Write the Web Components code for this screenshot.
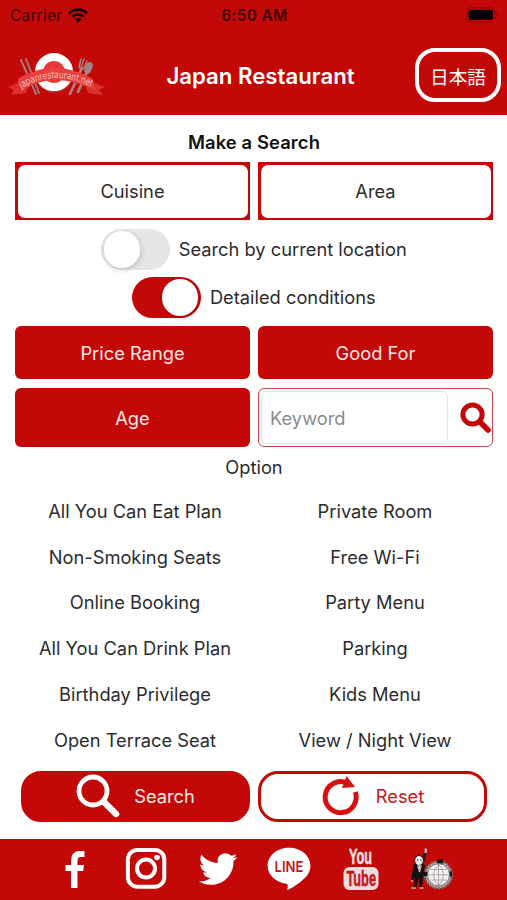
<!DOCTYPE html>
<html lang="en">
<head>
<meta charset="utf-8">
<title>Japan Restaurant</title>
<style>
  body {
    margin: 0;
    background: #fff;
    color: #2b2b2d;
    font-family: Inter, "Liberation Sans", "Noto Sans CJK JP", sans-serif;
    font-size: 18.3px;
    --red: #c30808;
  }
</style>
</head>
<body>
<search-app></search-app>

<script>
/**
 * StatusBar - phone status line with carrier, clock and battery
 */
class StatusBar extends HTMLElement {
  connectedCallback() {
    this.attachShadow({ mode: 'open' }).innerHTML = `
      <style>
        :host {
          display: grid;
          grid-template-columns: 1fr auto 1fr;
          align-items: center;
          height: 30px;
          padding: 0 8px 0 10px;
          color: #3f0203;
          font-size: 15.5px;
        }
        .carrier { display: flex; align-items: center; gap: 6px; letter-spacing: 0.2px; }
        .time { font-weight: 600; letter-spacing: 0.3px; }
        .battery { justify-self: end; }
        svg { display: block; }
      </style>
      <div class="carrier">
        <span>Carrier</span>
        <svg width="20" height="15" viewBox="0 0 20 15" fill="none" stroke="#140000" stroke-width="2.7">
          <path d="M1 5.3a13 13 0 0 1 18 0M4.3 8.8a8.2 8.2 0 0 1 11.4 0"/>
          <path d="M6.7 11.2a4.9 4.9 0 0 1 6.6 0L10 14.7z" fill="#140000" stroke="none"/>
        </svg>
      </div>
      <span class="time">6:50 AM</span>
      <svg class="battery" width="33" height="16" viewBox="0 0 33 16">
        <rect x=".8" y=".8" width="28" height="14" rx="4" fill="none" stroke="#960506" stroke-width="1.2"/>
        <rect x="2.6" y="2.7" width="24.4" height="10.2" rx="2.4" fill="#000"/>
        <path d="M30.5 5.5q2.6 2.2 0 4.6z" fill="#960506"/>
      </svg>
    `;
  }
}

/**
 * BrandLogo - plate, cutlery and ribbon
 */
class BrandLogo extends HTMLElement {
  connectedCallback() {
    this.attachShadow({ mode: 'open' }).innerHTML = `
      <style>
        :host { display: block; }
        svg { display: block; }
      </style>
      <svg width="98" height="48" viewBox="0 0 98 48">
        <g stroke="#a67777" stroke-width="2" stroke-linecap="round">
          <path d="M13 9l15 34M18 8l13 34"/>
        </g>
        <g stroke="#a58585" stroke-width="2.6" stroke-linecap="round" fill="#a58585">
          <path d="M74 17L62 43M79 21L70 41"/>
          <path d="M73 8l-2 8q2 4 5 1l3-7M76 8l-3 8" fill="none" stroke-width="1.5"/>
          <ellipse cx="80.5" cy="17" rx="2.3" ry="5" transform="rotate(22 80.5 17)"/>
        </g>
        <circle cx="46" cy="22.5" r="19" fill="#a94848"/>
        <circle cx="46" cy="21" r="15" fill="#e53a38" stroke="#fff" stroke-width="8"/>
        <path d="M12 31L0 36l6 3-3 5 15-2 2-7zM84 31l13 5-6 3 4 5-15-2-2-7z" fill="#dc302e"/>
        <path d="M10 27.500Q46 6 84 27.500L88 40Q46 18 13 40z" fill="#e83f3d"/>
        <path id="arc" d="M13.500 37.500Q46 17 86 37" fill="none"/>
        <text font-size="10" fill="#f9c1bc"><textPath href="#arc" textLength="73" lengthAdjust="spacingAndGlyphs">japanrestaurant.net</textPath></text>
      </svg>
    `;
  }
}

/**
 * PageHeader - title bar; the "lang" slot holds the language button
 */
class PageHeader extends HTMLElement {
  connectedCallback() {
    this.attachShadow({ mode: 'open' }).innerHTML = `
      <style>
        :host { display: block; height: 115px; background: var(--red); }
        .bar {
          display: grid;
          grid-template-columns: 1fr auto 1fr;
          align-items: center;
          height: 54px;
          padding: 18px 6px 0 8px;
        }
        h1 {
          margin: 0 0 0 12px;
          color: #fff;
          font-size: 22.2px;
          font-weight: 600;
          white-space: nowrap;
        }
        .lang {
          justify-self: end;
          display: flex;
          align-items: center;
          justify-content: center;
          box-sizing: border-box;
          width: 86px;
          height: 54px;
          border: 4px solid #fff;
          border-radius: 20px;
          color: #fff;
          font-family: "Noto Sans CJK JP", sans-serif;
          font-size: 18.7px;
        }
      </style>
      <status-bar></status-bar>
      <div class="bar">
        <brand-logo></brand-logo>
        <h1><slot></slot></h1>
        <div class="lang"><slot name="lang"></slot></div>
      </div>
    `;
  }
}

/**
 * SelectBox - large picker button
 *
 * @attr {boolean} outline - white with a square red frame
 */
class SelectBox extends HTMLElement {
  connectedCallback() {
    this.attachShadow({ mode: 'open' }).innerHTML = `
      <style>
        :host { display: block; background: var(--red); border-radius: 6px; color: #ffe9e6; }
        :host([outline]) { padding: 2.5px; border-radius: 0; color: #2b2b2d; box-sizing: border-box; }
        .face {
          display: flex;
          align-items: center;
          justify-content: center;
          height: 100%;
          border-radius: 7px;
        }
        :host([outline]) .face { background: #fff; }
      </style>
      <div class="face"><slot></slot></div>
    `;
  }
}

/**
 * ToggleRow - switch with a label
 *
 * @attr {boolean} on
 */
class ToggleRow extends HTMLElement {
  connectedCallback() {
    this.attachShadow({ mode: 'open' }).innerHTML = `
      <style>
        :host { display: flex; align-items: center; justify-content: center; gap: 9px; height: 41px; }
        .track {
          display: flex;
          box-sizing: border-box;
          width: 68.5px;
          height: 41.5px;
          padding: 2.5px;
          border-radius: 21px;
          background: #e6e6e8;
        }
        .knob {
          width: 36.5px;
          height: 36.5px;
          border-radius: 50%;
          background: #fff;
          box-shadow: 1px 2px 6px rgba(0, 0, 0, 0.16);
        }
        :host([on]) .track { background: var(--red); justify-content: flex-end; }
        .label { padding-bottom: 1px; }
      </style>
      <div class="track"><div class="knob"></div></div>
      <span class="label"><slot></slot></span>
    `;
  }
}

class KeywordField extends HTMLElement {
  connectedCallback() {
    this.attachShadow({ mode: 'open' }).innerHTML = `
      <style>
        :host {
          display: flex;
          align-items: center;
          justify-content: space-between;
          box-sizing: border-box;
          border: 1.3px solid #cd4444;
          border-radius: 6px;
          padding: 2px 1px 2px 2px;
        }
        .input {
          display: flex;
          align-items: center;
          box-sizing: border-box;
          width: 187px;
          height: 100%;
          padding-left: 8px;
          border: 1px solid #e6e6e6;
          border-radius: 5px;
          color: #8a8a8c;
        }
        svg { display: block; }
      </style>
      <div class="input"><slot></slot></div>
      <svg width="31" height="31" viewBox="0 0 31 31" fill="none" stroke="#c30808">
        <circle cx="12.5" cy="12.5" r="9.6" stroke-width="5"/>
        <path d="M20 20l8 8" stroke-width="5.6" stroke-linecap="round"/>
      </svg>
    `;
  }
}

/**
 * PillButton - rounded action button; icon goes in the "icon" slot
 *
 * @attr {boolean} outline
 */
class PillButton extends HTMLElement {
  connectedCallback() {
    this.attachShadow({ mode: 'open' }).innerHTML = `
      <style>
        :host {
          display: flex;
          align-items: center;
          justify-content: center;
          gap: 14px;
          box-sizing: border-box;
          border: 3.5px solid var(--red);
          border-radius: 20px;
          background: var(--red);
          color: #ffe9e6;
        }
        :host([outline]) { background: #fff; color: #c3161a; gap: 17px; }
      </style>
      <slot name="icon"></slot>
      <slot></slot>
    `;
  }
}

/**
 * SocialBar - footer with links to the social accounts
 */
class SocialBar extends HTMLElement {
  connectedCallback() {
    this.attachShadow({ mode: 'open' }).innerHTML = `
      <style>
        :host {
          display: grid;
          grid-template-columns: repeat(6, 71.6px);
          justify-content: center;
          justify-items: center;
          align-items: center;
          height: 59px;
          padding-bottom: 2px;
          background: var(--red);
        }
        svg { display: block; overflow: visible; }
      </style>
      <svg width="44" height="44" viewBox="0 0 44 44">
        <path fill="#fff" d="M18 41V24h-5.500v-6H18v-4.500Q18 4 27 4h4.500v6h-4Q24.500 10 24.500 13.500V18h6.500l-.8 6h-5.700v17z"/>
      </svg>
      <svg width="44" height="44" viewBox="0 0 44 44" fill="none" stroke="#fff">
        <rect x="3.900" y="2.900" width="36.400" height="36.800" rx="9.500" stroke-width="4"/>
        <circle cx="22" cy="21.500" r="9" stroke-width="4"/>
        <circle cx="33" cy="10.500" r="2.800" fill="#fff" stroke="none"/>
      </svg>
      <svg width="44" height="44" viewBox="0 0 44 44">
        <path fill="#fff" transform="translate(2.800 2.700) scale(1.610)" d="M23.953 4.570a10 10 0 0 1-2.825.775 4.958 4.958 0 0 0 2.163-2.723c-.951.555-2.005.959-3.127 1.184a4.920 4.920 0 0 0-8.384 4.482C7.690 8.095 4.067 6.130 1.640 3.162a4.822 4.822 0 0 0-.666 2.475c0 1.710.870 3.213 2.188 4.096a4.904 4.904 0 0 1-2.228-.616v.060a4.923 4.923 0 0 0 3.946 4.827 4.996 4.996 0 0 1-2.212.085 4.936 4.936 0 0 0 4.604 3.417 9.867 9.867 0 0 1-6.102 2.105c-.390 0-.779-.023-1.170-.067a13.995 13.995 0 0 0 7.557 2.209c9.053 0 13.998-7.496 13.998-13.985 0-.210 0-.420-.015-.630A9.935 9.935 0 0 0 24 4.590z"/>
      </svg>
      <svg width="44" height="44" viewBox="0 0 44 44">
        <path fill="#fff" d="M22 .8C10 .8.600 8.800.600 18.800c0 9.200 8 16.500 18.500 18 1.800.400 2 1.300 1.200 6.300 3-1.200 12-6.200 18.700-13.300 3-3.400 4.400-7 4.400-11C43.400 8.800 34 .8 22 .8z"/>
        <text x="22" y="25" text-anchor="middle" font-size="15" font-weight="600" fill="#c3161a" textLength="29" lengthAdjust="spacingAndGlyphs">LINE</text>
      </svg>
      <svg width="44" height="44" viewBox="0 0 44 44" font-family="Liberation Sans, sans-serif" font-weight="700">
        <text x="10" y="17" font-size="22" fill="#fbe2e0" stroke="#fbe2e0" stroke-width=".5" textLength="23" lengthAdjust="spacingAndGlyphs">You</text>
        <rect x="4.500" y="20" width="35" height="23" rx="6" fill="#ecdcdc"/>
        <text x="7.500" y="39" font-size="21.500" fill="#c3161a" stroke="#c3161a" stroke-width=".5" textLength="29.500" lengthAdjust="spacingAndGlyphs">Tube</text>
      </svg>
      <svg width="44" height="44" viewBox="0 0 44 44">
        <path d="M13 15l3-12" stroke="#3a1414" stroke-width="3"/>
        <path d="M15.500 6l.5-4.500" stroke="#e7aaa8" stroke-width="2.400"/>
        <path d="M3.500 18q6-4 11.500 0l-2 14-1 9H9.500L9 32l-3 9H3.500L5 31l-3 3-1-1z" fill="#151112"/>
        <ellipse cx="9" cy="13.500" rx="4.300" ry="5" fill="#eee" stroke="#27191a"/>
        <path d="M7 13h1.500M10 13h1.500" stroke="#222"/>
        <path d="M8 19l1.500 6 1.500-6zM1.500 41H6M9.500 41h4M1 34h2" fill="#ddd" stroke="#c5b1b1" stroke-width="1.400"/>
        <circle cx="28.500" cy="27.800" r="13.300" fill="#bcaead" stroke="#777" stroke-width="2.600" stroke-dasharray="2 1.200"/>
        <path d="M27 12.500h6v4h-6zM38 24.500h4v5h-4zM13.500 25h5v4h-5z" fill="#111"/>
        <circle cx="28.500" cy="27.800" r="11" fill="#f4f0ef" stroke="#666" stroke-width=".8"/>
        <path d="M28.500 17v22M18 27.800h21M20.500 22.500h16M20.500 33h16M28.500 17q-10 10.800 0 22M28.500 17q10 10.800 0 22" fill="none" stroke="#999" stroke-width=".8"/>
      </svg>
    `;
  }
}

/**
 * SearchApp - the whole search screen
 */
class SearchApp extends HTMLElement {
  connectedCallback() {
    const options = [
      'All You Can Eat Plan', 'Private Room',
      'Non-Smoking Seats', 'Free Wi-Fi',
      'Online Booking', 'Party Menu',
      'All You Can Drink Plan', 'Parking',
      'Birthday Privilege', 'Kids Menu',
      'Open Terrace Seat', 'View / Night View'
    ];
    const optionHtml = options.map(o => `<span>${o}</span>`).join('');

    this.attachShadow({ mode: 'open' }).innerHTML = `
      <style>
        :host { display: flex; flex-direction: column; height: 900px; overflow: hidden; }
        main { flex: 1; padding: 0 14px 0 15px; }
        h2 {
          margin: 0;
          padding-top: 7.5px;
          height: 39px;
          box-sizing: border-box;
          color: #111;
          font-size: 18.4px;
          line-height: 38px;
          font-weight: 600;
          text-align: center;
          letter-spacing: 0.1px;
        }
        .pair { display: grid; grid-template-columns: 235px 235px; gap: 8px; }
        .select { margin-top: 8px; height: 58px; }
        .first { margin-top: 9px; }
        .second { margin-top: 7px; }
        .price { margin-top: 8px; height: 53px; }
        .age { margin-top: 9px; height: 59px; }
        .caption { height: 41px; line-height: 41px; text-align: center; }
        .options {
          display: grid;
          grid-template-columns: 240px 240px;
          grid-auto-rows: 45.8px;
          align-items: center;
          justify-items: center;
          white-space: nowrap;
        }
        .actions {
          grid-template-columns: 229px 229px;
          height: 51px;
          margin: 8px 0 0 6px;
        }
        svg { display: block; }
      </style>
      <page-header>Japan Restaurant<span slot="lang">日本語</span></page-header>
      <main>
        <h2>Make a Search</h2>
        <div class="pair select">
          <select-box outline>Cuisine</select-box>
          <select-box outline>Area</select-box>
        </div>
        <toggle-row class="first">Search by current location</toggle-row>
        <toggle-row class="second" on>Detailed conditions</toggle-row>
        <div class="pair price">
          <select-box>Price Range</select-box>
          <select-box>Good For</select-box>
        </div>
        <div class="pair age">
          <select-box>Age</select-box>
          <keyword-field>Keyword</keyword-field>
        </div>
        <div class="caption">Option</div>
        <div class="options">${optionHtml}</div>
        <div class="pair actions">
          <pill-button>
            <svg slot="icon" width="44" height="44" viewBox="0 0 44 44" fill="none" stroke="#fff">
              <circle cx="17" cy="17" r="14" stroke-width="4.8"/>
              <path d="M27.5 27.5L40 40" stroke-width="6.5" stroke-linecap="round"/>
            </svg>
            Search
          </pill-button>
          <pill-button outline>
            <svg slot="icon" width="38" height="40" viewBox="0 0 38 40">
              <path d="M26 7A15.5 15.5 0 1 0 34.3 16" fill="none" stroke="#d80f0f" stroke-width="5"/>
              <path d="M25.5 0l8.500 11-13 1z" fill="#d80f0f"/>
            </svg>
            Reset
          </pill-button>
        </div>
      </main>
      <social-bar></social-bar>
    `;
  }
}

customElements.define('status-bar', StatusBar);
customElements.define('brand-logo', BrandLogo);
customElements.define('page-header', PageHeader);
customElements.define('select-box', SelectBox);
customElements.define('toggle-row', ToggleRow);
customElements.define('keyword-field', KeywordField);
customElements.define('pill-button', PillButton);
customElements.define('social-bar', SocialBar);
customElements.define('search-app', SearchApp);
</script>
</body>
</html>
